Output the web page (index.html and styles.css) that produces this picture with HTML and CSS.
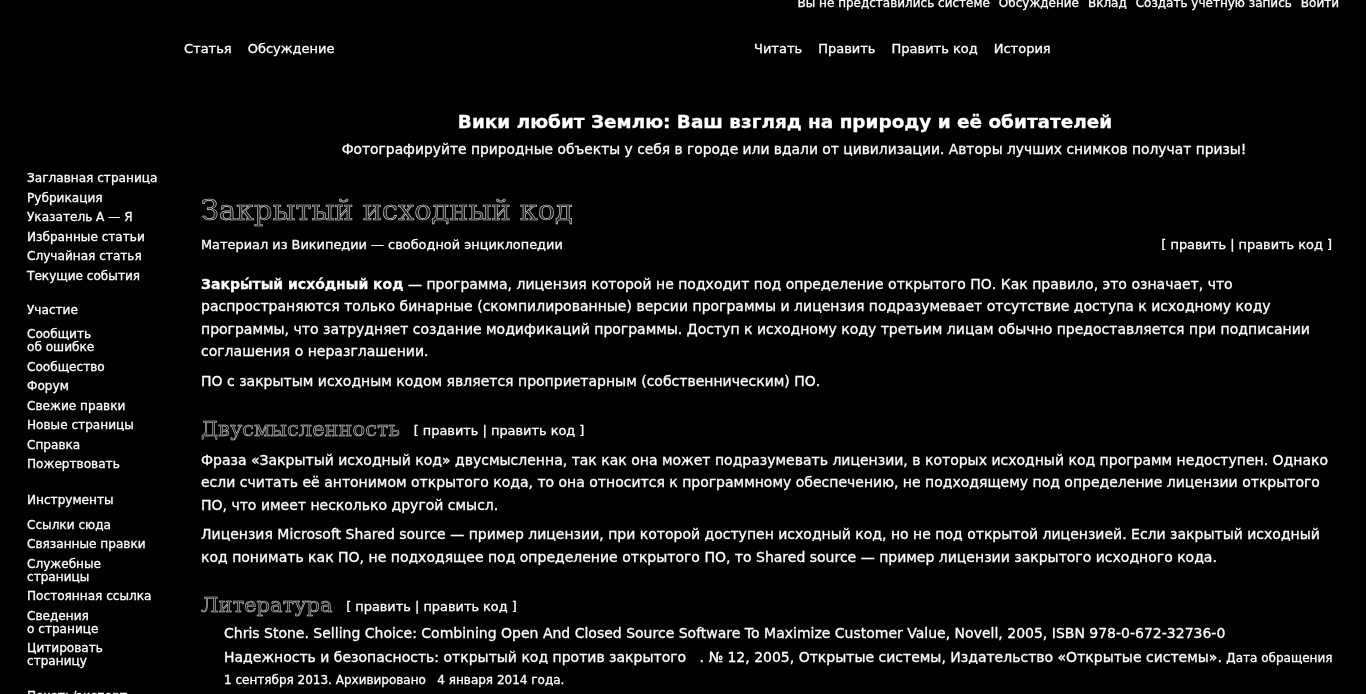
FILE: index.html
```html
<!DOCTYPE html>
<html lang="ru">

<head>
	<meta charset="utf-8" />
	<title>Закрытый исходный код</title>
	<link rel="stylesheet" href="styles.css">
</head>

<body>
	<div class="page">
		<div class="personal">
			<a>Вы не представились системе</a>
			<a>Обсуждение</a>
			<a>Вклад</a>
			<a>Создать учётную запись</a>
			<a>Войти</a>
		</div>
		<div class="tabs">
			<div class="tabs-left">
				<a>Статья</a>
				<a>Обсуждение</a>
			</div>
			<div class="tabs-right">
				<a>Читать</a>
				<a>Править</a>
				<a>Править код</a>
				<a>История</a>
			</div>
		</div>
		<div class="notice">
			<div class="notice-title">Вики любит Землю: Ваш взгляд на природу и её обитателей</div>
			<div class="notice-sub">Фотографируйте природные объекты у себя в городе или вдали от цивилизации. Авторы лучших снимков получат призы!</div>
		</div>
		<div class="layout">
			<div class="sidebar">
				<ul>
					<li>Заглавная страница</li>
					<li>Рубрикация</li>
					<li>Указатель А — Я</li>
					<li>Избранные статьи</li>
					<li>Случайная статья</li>
					<li>Текущие события</li>
				</ul>
				<h3>Участие</h3>
				<ul>
					<li>Сообщить<br>об ошибке</li>
					<li>Сообщество</li>
					<li>Форум</li>
					<li>Свежие правки</li>
					<li>Новые страницы</li>
					<li>Справка</li>
					<li>Пожертвовать</li>
				</ul>
				<h3 class="tools-head">Инструменты</h3>
				<ul>
					<li>Ссылки сюда</li>
					<li>Связанные правки</li>
					<li>Служебные<br>страницы</li>
					<li>Постоянная ссылка</li>
					<li>Сведения<br>о странице</li>
					<li>Цитировать<br>страницу</li>
				</ul>
				<h3>Печать/экспорт</h3>
			</div>
			<div class="content">
				<div class="title-row">
					<h1>Закрытый исходный код</h1>
				</div>
				<div class="sub-row">
					<span>Материал из Википедии — свободной энциклопедии</span>
					<span class="edit">[ править | править код ]</span>
				</div>
				<p><b>Закры́тый исхо́дный код</b> — программа, лицензия которой не подходит под определение открытого ПО. Как правило, это означает, что<br>распространяются только бинарные (скомпилированные) версии программы и лицензия подразумевает отсутствие доступа к исходному коду<br>программы, что затрудняет создание модификаций программы. Доступ к исходному коду третьим лицам обычно предоставляется при подписании<br>соглашения о неразглашении.</p>
				<p>ПО с закрытым исходным кодом является проприетарным (собственническим) ПО.</p>
				<h2>Двусмысленность <span class="edit">[ править | править код ]</span></h2>
				<p>Фраза «Закрытый исходный код» двусмысленна, так как она может подразумевать лицензии, в которых исходный код программ недоступен. Однако<br>если считать её антонимом открытого кода, то она относится к программному обеспечению, не подходящему под определение лицензии открытого<br>ПО, что имеет несколько другой смысл.</p>
				<p>Лицензия Microsoft Shared source — пример лицензии, при которой доступен исходный код, но не под открытой лицензией. Если закрытый исходный<br>код понимать как ПО, не подходящее под определение открытого ПО, то Shared source — пример лицензии закрытого исходного кода.</p>
				<h2>Литература <span class="edit">[ править | править код ]</span></h2>
				<ul class="refs">
					<li>Chris Stone. Selling Choice: Combining Open And Closed Source Software To Maximize Customer Value, Novell, 2005, ISBN 978-0-672-32736-0</li>
					<li>Надежность и безопасность: открытый код против закрытого &nbsp;&nbsp;. № 12, 2005, Открытые системы, Издательство «Открытые системы». <small>Дата обращения<br>1 сентября 2013. Архивировано &nbsp;&nbsp;4 января 2014 года.</small></li>
				</ul>
			</div>
		</div>
	</div>
</body>

</html>
```

FILE: styles.css
```css
html,
body {
	margin: 0;
	padding: 0;
	background: black;
}

.page {
	height: 694px;
	overflow: hidden;
	background: black;
	color: white;
	font-family: "DejaVu Sans", sans-serif;
	font-size: 14px;
	-webkit-text-stroke: 0.3px white;
	filter: blur(0.5px);
}

.personal {
	display: flex;
	justify-content: flex-end;
	gap: 9px;
	height: 13px;
	margin-top: -3px;
	padding-right: 27px;
	font-size: 12px;
	line-height: 13px;
}

.tabs {
	display: flex;
	margin-top: 32px;
	padding-left: 184px;
	font-size: 13px;
	line-height: 14px;
}

.tabs-left {
	display: flex;
	gap: 16px;
	width: 570px;
}

.tabs-right {
	display: flex;
	gap: 16px;
}

.notice {
	margin-top: 54px;
	padding-left: 184px;
	text-align: center;
}

.notice-title {
	font-size: 18.45px;
	font-weight: bold;
	line-height: 24px;
	padding-left: 20px;
}

.notice-sub {
	margin-top: 7px;
	font-size: 13.85px;
	line-height: 16px;
	padding-left: 38px;
}

.layout {
	display: grid;
	grid-template-columns: 201px 1131px;
}

.sidebar {
	padding-top: 15px;
	padding-left: 27px;
	font-size: 12.1px;
	line-height: 13px;
}

.sidebar ul {
	list-style: none;
	margin: 0;
	padding: 0;
}

.sidebar li {
	padding-bottom: 6.5px;
}

.sidebar h3 {
	margin: 15px 0 11px;
	font-size: 12.1px;
	font-weight: normal;
	line-height: 13px;
}

.sidebar .tools-head {
	margin: 16px 0 12px;
}

.content {
	padding-top: 36px;
}

h1 {
	margin: 0;
	font-family: "DejaVu Serif", serif;
	font-size: 28.8px;
	font-weight: normal;
	line-height: 34px;
	color: #222;
	-webkit-text-stroke: 0.6px #ddd;
}

.sub-row {
	display: flex;
	justify-content: space-between;
	margin-top: 10px;
	font-size: 12.9px;
	line-height: 16px;
}

.edit {
	font-family: "DejaVu Sans", sans-serif;
	font-size: 12.9px;
	-webkit-text-stroke: 0.3px white;
	color: white;
}

p {
	margin: 0 0 7px;
	font-size: 14px;
	line-height: 22.4px;
}

.sub-row + p {
	margin-top: 20px;
}

h2 + p + p {
	margin-bottom: 6px;
}

h2 {
	margin: 24px 0 5px;
	font-family: "DejaVu Serif", serif;
	font-size: 21px;
	font-weight: normal;
	line-height: 26px;
	color: #222;
	-webkit-text-stroke: 0.5px #ddd;
}

h2 .edit {
	margin-left: 7px;
	vertical-align: 1px;
}

.refs {
	list-style: none;
	margin: -3px 0 0;
	padding: 0 0 0 23px;
	font-size: 14px;
	line-height: 23px;
	white-space: nowrap;
}

.refs li:first-child {
	margin-bottom: 2px;
}

.refs li:last-child {
	line-height: 21px;
}

.refs small {
	font-size: 12px;
}
```
